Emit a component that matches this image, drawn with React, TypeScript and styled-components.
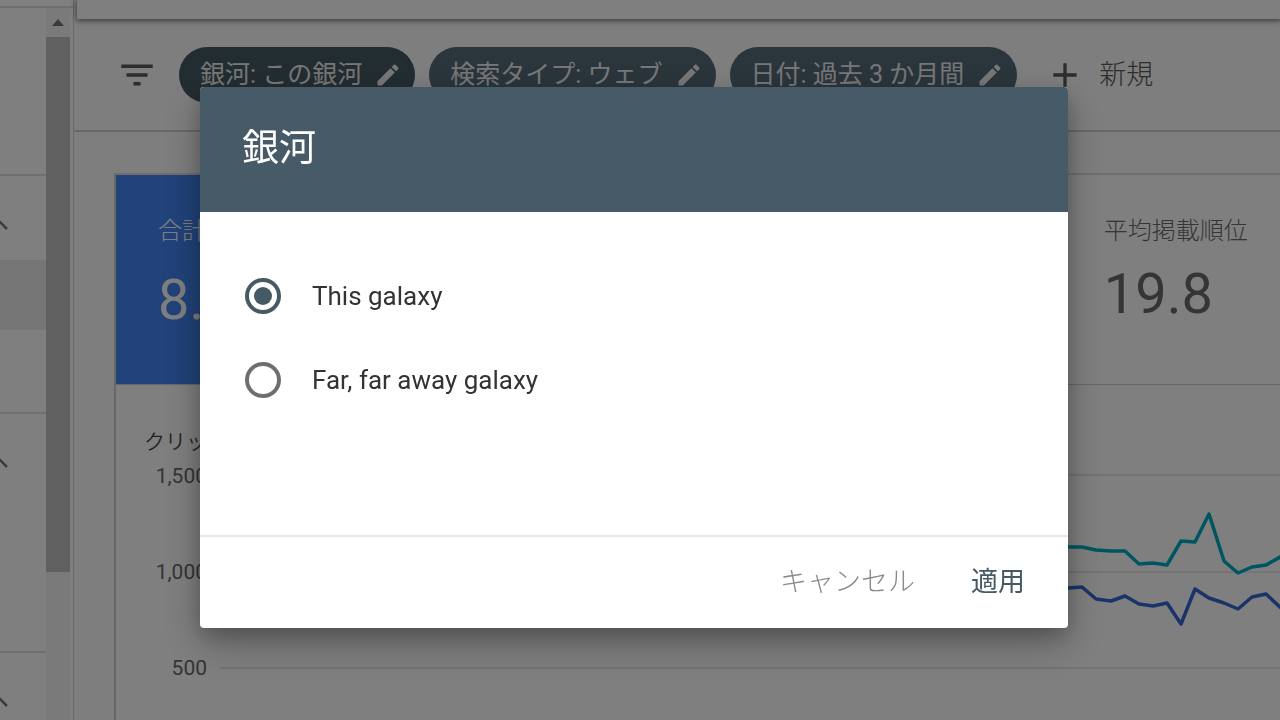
import React, { useState } from "react";
import styled, { createGlobalStyle } from "styled-components";
import { MdAdd, MdFilterList } from "react-icons/md";

const GlobalStyle = createGlobalStyle`
  *, *::before, *::after { box-sizing: border-box; }
  body {
    margin: 0;
    background: #fff;
    color: #6a6a6a;
    font-family: Roboto, "Noto Sans CJK JP", sans-serif;
  }
  button, input { font: inherit; }
`;

const Page = styled.div`
  display: flex;
  height: 100vh;
  overflow: hidden;
`;

/* Sidebar */

const Sidebar = styled.aside`
  flex: none;
  display: flex;
  flex-direction: column;
  width: 74px;
  border-right: 1px solid #d4d4d4;
`;

const SidebarTop = styled.div`
  flex: none;
  height: 8px;
  border-bottom: 2px solid #dedede;
`;

const SidebarBody = styled.div`
  flex: 1;
  display: flex;
  min-height: 0;
`;

const NavGroups = styled.nav`
  flex: 1;
  overflow: hidden;
`;

const NavGroup = styled.section<{ $height: number }>`
  height: ${(p) => p.$height}px;
  border-bottom: 2px solid #dedede;
`;

const CollapseButton = styled.button`
  display: flex;
  justify-content: flex-end;
  align-items: center;
  width: 9px;
  height: 84px;
  padding: 14px 0 0;
  border: 0;
  background: none;
  color: #777;
  overflow: hidden;

  svg { flex: none; }
`;

const ActiveItem = styled.a`
  display: block;
  height: 70px;
  background: #ececec;
`;

const Scrollbar = styled.div`
  flex: none;
  width: 24px;
  margin-right: 3px;
  background: #f5f5f5;
`;

const ScrollArrow = styled.div`
  display: flex;
  justify-content: center;
  align-items: center;
  height: 29px;
`;

const ScrollThumb = styled.div`
  height: 535px;
  background: #c1c1c1;
`;

/* Main column */

const Main = styled.main`
  flex: 1;
  display: flex;
  flex-direction: column;
  min-width: 0;
  background: #fcfcfc;
`;

const TopBar = styled.header`
  flex: none;
  height: 19px;
  margin-left: 3px;
  background: #fff;
  box-shadow: 0 1px 5px 1px rgba(0, 0, 0, 0.5);
`;

const FilterBar = styled.div`
  flex: none;
  display: flex;
  align-items: center;
  gap: 14px;
  height: 113px;
  padding: 0 42px;
  border-bottom: 2px solid #d0d0d0;
  white-space: nowrap;
`;

const FilterIcon = styled(MdFilterList)`
  flex: none;
  margin-right: 7px;
  color: #5a5a5a;
`;

const Chip = styled.button<{ $active?: boolean }>`
  flex: none;
  display: flex;
  align-items: center;
  gap: 12px;
  height: 56px;
  padding: 0 13px 0 21px;
  border: 0;
  border-radius: 28px;
  background: ${(p) => (p.$active ? "#455a64" : "#546a78")};
  color: #eee;
  font-size: 25px;
  font-weight: 400;
  line-height: 36px;
`;

const NewFilterButton = styled.button`
  display: flex;
  align-items: center;
  gap: 14px;
  padding: 0 14px;
  border: 0;
  background: none;
  color: #5a5a5a;
  font-size: 27px;
  font-weight: 300;
  line-height: 36px;
`;

const Report = styled.section`
  flex: 1;
  display: flex;
  flex-direction: column;
  margin: 41px 0 0 40px;
  border-top: 2px solid #dedede;
  border-left: 2px solid #cfcfcf;
  background: #fff;
`;

const Metrics = styled.div`
  flex: none;
  display: grid;
  grid-template-columns: 13fr 13fr 13fr 9fr;
  height: 210px;
  border-bottom: 1px solid #cfcfcf;
`;

const Metric = styled.div<{ $selected?: boolean; $column: number }>`
  grid-column: ${(p) => p.$column};
  display: flex;
  flex-direction: column;
  gap: ${(p) => (p.$selected ? 17 : 11)}px;
  padding: 38px 0 0 42px;
  background: ${(p) => (p.$selected ? "#4285f4" : "#fff")};
  color: ${(p) => (p.$selected ? "#fff" : "#6a6a6a")};
  white-space: nowrap;
`;

const MetricLabel = styled.span`
  font-size: 24px;
  font-weight: 300;
  line-height: 36px;
`;

const MetricValue = styled.span`
  font-size: 56px;
  line-height: 68px;
`;

const ChartPanel = styled.div`
  flex: 1;
  display: grid;
  grid-template-columns: 91px 1fr;
  grid-template-rows: 34px 1fr;
  column-gap: 13px;
  padding-top: 41px;
  font-size: 21px;
`;

const AxisTitle = styled.span`
  grid-column: 1 / 3;
  padding-left: 28px;
  color: #484848;
  font-weight: 350;
  line-height: 32px;
`;

const Ticks = styled.div`
  display: flex;
  flex-direction: column;
  align-items: flex-end;
  gap: 72px;
  margin-top: 4px;
  line-height: 24px;
`;

const Plot = styled.svg`
  display: block;
  width: 100%;
  height: 260px;
`;

/* Dialog */

const Backdrop = styled.div`
  position: fixed;
  inset: 0;
  display: flex;
  align-items: center;
  justify-content: center;
  padding: 0 12px 5px 0;
  background: rgba(0, 0, 0, 0.5);
`;

const Dialog = styled.form`
  display: flex;
  flex-direction: column;
  width: 868px;
  max-width: 100%;
  border-radius: 4px;
  background: #fff;
  box-shadow: 0 16px 40px rgba(0, 0, 0, 0.25), 0 8px 20px rgba(0, 0, 0, 0.2);
  overflow: hidden;
`;

const DialogTitle = styled.h2`
  margin: 0;
  padding: 35px 42px 36px;
  background: #475a67;
  color: #fff;
  font-size: 37px;
  font-weight: 400;
  line-height: 54px;
`;

const Options = styled.div`
  display: flex;
  flex-direction: column;
  gap: 42px;
  min-height: 323px;
  padding: 63px 42px;
`;

const Option = styled.label`
  display: flex;
  align-items: center;
  gap: 31px;
  color: #333;
  font-size: 26px;
  line-height: 42px;
`;

const Radio = styled.input`
  appearance: none;
  flex: none;
  display: grid;
  place-items: center;
  width: 36px;
  height: 36px;
  margin: 0 0 0 3px;
  border: 4px solid #6e6e6e;
  border-radius: 50%;

  &:checked { border-color: #455a64; }

  &:checked::before {
    content: "";
    width: 18px;
    height: 18px;
    border-radius: 50%;
    background: #455a64;
  }
`;

const Actions = styled.div`
  display: flex;
  justify-content: flex-end;
  align-items: center;
  gap: 28px;
  height: 93px;
  padding: 0 29px 2px;
  border-top: 2px solid #e8e8e8;
`;

const ActionButton = styled.button<{ $primary?: boolean }>`
  padding: 14px;
  border: 0;
  background: none;
  color: ${(p) => (p.$primary ? "#455a64" : "#8a8a8a")};
  font-size: 27px;
  font-weight: ${(p) => (p.$primary ? 400 : 300)};
  line-height: 36px;
`;

const filters = ["銀河: この銀河", "検索タイプ: ウェブ", "日付: 過去 3 か月間"];
const galaxies = ["This galaxy", "Far, far away galaxy"];
const ticks = ["1,500", "1,000", "500"];
const navGroups = [168, 238, 239, 238];

const impressions =
  "836,48 848,47 862,47 876,50 891,51 905,51 919,64 933,63 947,65 961,41 975,42 989,14 1004,61 1018,73 1032,67 1046,65 1062,56";
const clicks =
  "836,88 848,88 862,87 876,99 891,101 905,96 919,104 933,106 947,103 961,124 975,89 989,98 1004,103 1018,109 1032,97 1046,94 1062,109";

function Chevron() {
  return (
    <svg width="20" height="10" viewBox="0 0 20 10" aria-hidden="true">
      <path d="M3 9 L10.500 1.500 L18 9" fill="none" stroke="currentColor" strokeWidth="2.500" />
    </svg>
  );
}

function Pencil() {
  return (
    <svg width="28" height="28" viewBox="0 0 24 24" fill="currentColor" aria-hidden="true">
      <path d="M3 17.250V21h3.750L17.810 9.940l-3.750-3.750L3 17.250zM20.710 7.040a1 1 0 0 0 0-1.410l-2.340-2.340a1 1 0 0 0-1.410 0l-1.830 1.830 3.750 3.750 1.830-1.830z" />
    </svg>
  );
}

export default function App() {
  const [galaxy, setGalaxy] = useState(galaxies[0]);

  return (
    <>
      <GlobalStyle />
      <Page>
        <Sidebar>
          <SidebarTop />
          <SidebarBody>
            <NavGroups>
              {navGroups.map((height, i) => (
                <NavGroup key={i} $height={height}>
                  {i > 0 && (
                    <CollapseButton aria-label="折りたたむ">
                      <Chevron />
                    </CollapseButton>
                  )}
                  {i === 1 && <ActiveItem href="#" aria-current="page" />}
                </NavGroup>
              ))}
            </NavGroups>
            <Scrollbar>
              <ScrollArrow>
                <svg width="12" height="7" viewBox="0 0 12 7" aria-hidden="true">
                  <path d="M0 7 L6 0 L12 7 Z" fill="#777" />
                </svg>
              </ScrollArrow>
              <ScrollThumb />
            </Scrollbar>
          </SidebarBody>
        </Sidebar>

        <Main>
          <TopBar />
          <FilterBar>
            <FilterIcon size={42} />
            {filters.map((label, i) => (
              <Chip key={label} $active={i === 0}>
                {label}
                <Pencil />
              </Chip>
            ))}
            <NewFilterButton>
              <MdAdd size={40} />
              新規
            </NewFilterButton>
          </FilterBar>

          <Report>
            <Metrics>
              <Metric $column={1} $selected>
                <MetricLabel>合計クリック数</MetricLabel>
                <MetricValue>8.2</MetricValue>
              </Metric>
              <Metric $column={4}>
                <MetricLabel>平均掲載順位</MetricLabel>
                <MetricValue>19.8</MetricValue>
              </Metric>
            </Metrics>
            <ChartPanel>
              <AxisTitle>クリック数</AxisTitle>
              <Ticks>
                {ticks.map((tick) => (
                  <span key={tick}>{tick}</span>
                ))}
              </Ticks>
              <Plot aria-hidden="true">
                <g stroke="#e8e8e8" strokeWidth="2">
                  <line x1="0" x2="100%" y1="15" y2="15" />
                  <line x1="0" x2="100%" y1="112" y2="112" />
                  <line x1="0" x2="100%" y1="208" y2="208" />
                </g>
                <g fill="none" strokeWidth="3.500" strokeLinejoin="round">
                  <polyline points={impressions} stroke="#00acc1" transform="translate(0 40)" />
                  <polyline points={clicks} stroke="#3367d6" transform="translate(0 40)" />
                </g>
              </Plot>
            </ChartPanel>
          </Report>
        </Main>
      </Page>

      <Backdrop>
        <Dialog role="dialog" aria-modal="true" aria-labelledby="dialog-title" onSubmit={(e) => e.preventDefault()}>
          <DialogTitle id="dialog-title">銀河</DialogTitle>
          <Options>
            {galaxies.map((name) => (
              <Option key={name}>
                <Radio type="radio" name="galaxy" checked={galaxy === name} onChange={() => setGalaxy(name)} />
                {name}
              </Option>
            ))}
          </Options>
          <Actions>
            <ActionButton type="button">キャンセル</ActionButton>
            <ActionButton type="submit" $primary>
              適用
            </ActionButton>
          </Actions>
        </Dialog>
      </Backdrop>
    </>
  );
}
